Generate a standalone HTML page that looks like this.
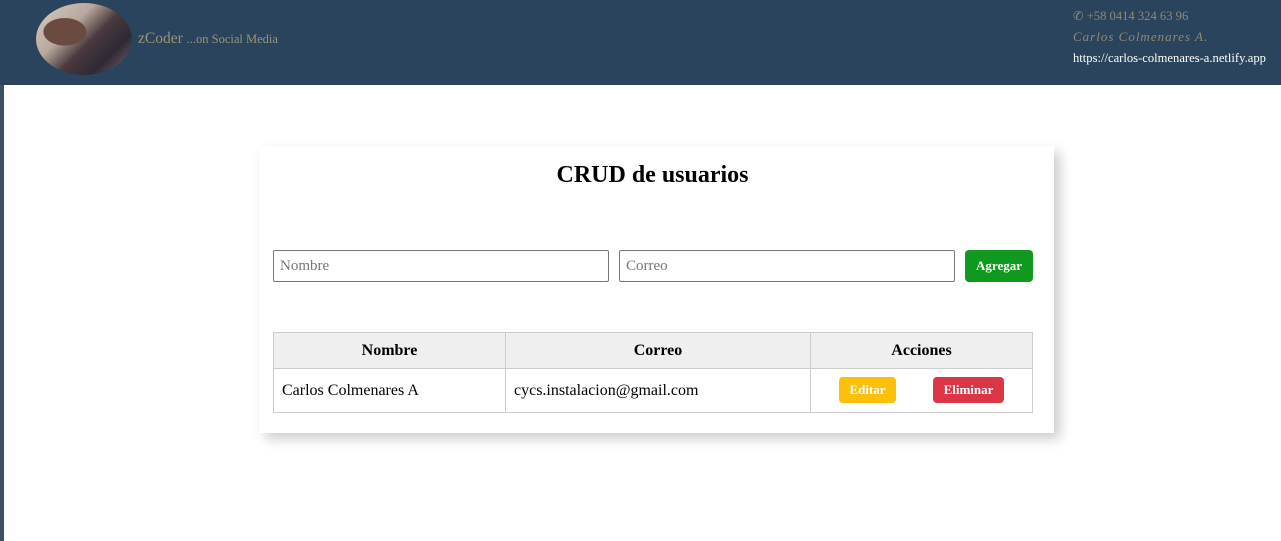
<!DOCTYPE html>
<html><head><meta charset="utf-8"><style>
*{box-sizing:border-box;margin:0;padding:0}
body{width:1281px;height:541px;background:#fff;font-family:"Liberation Serif",serif;position:relative;overflow:hidden}
.strip{position:absolute;left:0;top:0;width:4px;height:541px;background:#3d5166}
header{position:absolute;left:0;top:0;width:1281px;height:85px;background:#29445c}
.av{position:absolute;left:36px;top:3px;width:96px;height:72px;border-radius:50%;background:radial-gradient(ellipse at 30% 40%,#6b4a40 0 22%,transparent 23%),linear-gradient(135deg,#d9cdc3 0%,#b9a89c 35%,#4a3a3e 55%,#2d2a35 75%,#7a6a70 100%)}
.brand{position:absolute;left:138px;top:30px;color:#9b9473;font-size:15.5px}
.brand small{font-size:12.5px}
.ct{position:absolute;left:1073px;top:7px;font-size:12.6px;line-height:18px}
.ct .p{color:#8f8a74}
.ct .n{color:#8f8a74;font-style:italic;letter-spacing:1px;font-size:13px;margin-top:3px}
.ct .u{color:#fff;margin-top:3px}
.card{position:absolute;left:259px;top:146px;width:795px;height:287px;background:#fff;box-shadow:6px 6px 12px rgba(0,0,0,.2)}
h1{position:absolute;left:0;width:787px;top:16px;text-align:center;font-size:24px;font-weight:bold}
input{position:absolute;top:104px;height:32px;width:336px;border:1px solid #777;border-radius:2px;font-family:"Liberation Serif",serif;font-size:15px;padding-left:6px;color:#777}
.btn{position:absolute;color:#fff;font-weight:bold;border-radius:4px;text-align:center;font-size:13px}
table{position:absolute;left:14px;top:186px;width:760px;border-collapse:collapse;font-size:16px}
th{background:#efefef;border:1px solid #ccc;height:36px;font-size:16px}
td{border:1px solid #ccc;height:44px;padding-left:8px}
</style></head><body>
<header>
<div class="av"></div>
<div class="brand">zCoder <small>...on Social Media</small></div>
<div class="ct"><div class="p">&#9990; +58 0414 324 63 96</div><div class="n">Carlos Colmenares A.</div><div class="u">https://carlos-colmenares-a.netlify.app</div></div>
</header>
<div class="strip" style="top:85px;height:456px"></div>
<div class="card">
<h1>CRUD de usuarios</h1>
<input style="left:14px" value="Nombre">
<input style="left:360px" value="Correo">
<div class="btn" style="left:706px;top:104px;width:68px;height:32px;line-height:32px;background:#0f9a1f">Agregar</div>
<table>
<tr><th style="width:232px">Nombre</th><th style="width:305px">Correo</th><th>Acciones</th></tr>
<tr><td>Carlos Colmenares A</td><td>cycs.instalacion@gmail.com</td><td></td></tr>
</table>
<div class="btn" style="left:580px;top:231px;width:57px;height:26px;line-height:26px;background:#fcc00b">Editar</div>
<div class="btn" style="left:674px;top:231px;width:71px;height:26px;line-height:26px;background:#dc3545">Eliminar</div>
</div>
</body></html>
